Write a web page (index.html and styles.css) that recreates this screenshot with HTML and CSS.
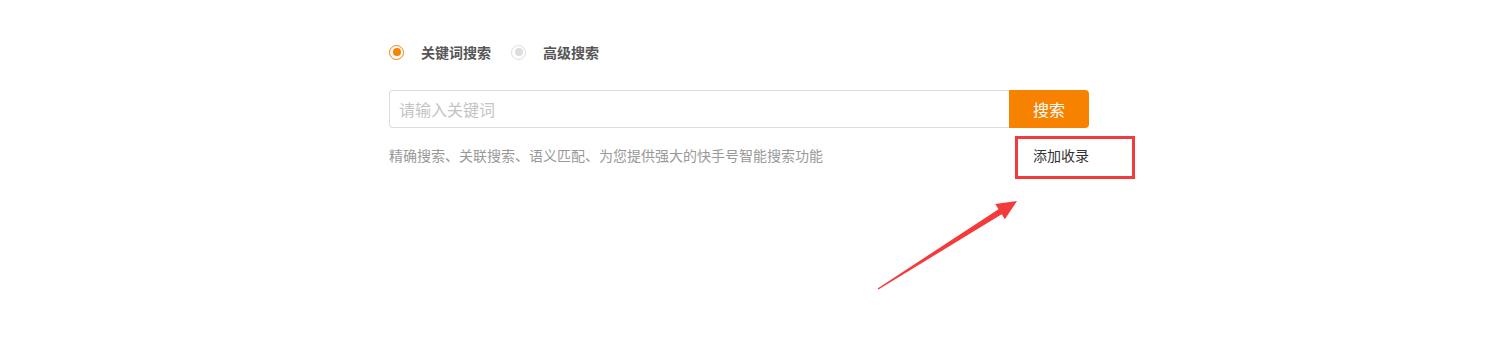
FILE: index.html
```html
<!DOCTYPE html>
<html lang="zh-CN">
<head>
  <meta charset="UTF-8" />
  <title>快手号搜索</title>
  <link rel="stylesheet" href="styles.css">
</head>
<body>
  <div class="search-box">
    <div class="tabs">
      <label class="tab active"><span class="radio"></span>关键词搜索</label>
      <label class="tab"><span class="radio"></span>高级搜索</label>
    </div>

    <div class="search-row">
      <input class="search-input" type="text" placeholder="请输入关键词">
      <button class="search-btn">搜索</button>
    </div>

    <div class="tips">
      <span class="desc">精确搜索、关联搜索、语义匹配、为您提供强大的快手号智能搜索功能</span>
      <a class="add-link" href="#">添加收录<span class="mark"></span></a>
    </div>
  </div>

  <!-- annotation arrow -->
  <svg class="arrow" width="160" height="110" viewBox="0 0 160 110">
    <polygon points="7.6,98.4 128.5,19.2 125.3,14.1 147,11 134.9,29.3 131.7,24.2 8.4,99.6" fill="#f43b3b"/>
  </svg>
</body>
</html>
```

FILE: styles.css
```css
body {
  margin: 0;
  background: #fff;
  font-family: "Noto Sans CJK SC", "Noto Sans", sans-serif;
  color: #333;
}

.search-box {
  width: 700px;
  margin-left: 389px;
  padding-top: 42px;
  padding-bottom: 40px;
}

.tabs {
  display: flex;
  align-items: center;
  height: 20px;
  gap: 20px;
}

.tab {
  display: flex;
  align-items: center;
  gap: 17px;
  font-size: 14px;
  font-weight: bold;
  color: #555;
  line-height: 20px;
  cursor: pointer;
}

.radio {
  width: 13px;
  height: 13px;
  border: 1px solid #ddd;
  border-radius: 50%;
  display: flex;
  align-items: center;
  justify-content: center;
}

.radio::after {
  content: "";
  width: 8px;
  height: 8px;
  border-radius: 50%;
  background: #ddd;
}

.tab.active .radio {
  border-color: #f78200;
}

.tab.active .radio::after {
  background: #f78200;
}

.search-row {
  display: flex;
  margin-top: 28px;
  height: 38px;
}

.search-input {
  box-sizing: border-box;
  width: 620px;
  height: 38px;
  border: 1px solid #ddd;
  border-right: none;
  border-radius: 4px 0 0 4px;
  padding: 0 9px;
  font-family: inherit;
  font-size: 16px;
  outline: none;
}

.search-input::placeholder {
  color: #c4c4c4;
}

.search-btn {
  width: 80px;
  height: 38px;
  border: none;
  border-radius: 0 4px 4px 0;
  background: #f78200;
  color: #fff;
  font-family: inherit;
  font-size: 16px;
  cursor: pointer;
}

.tips {
  display: flex;
  justify-content: space-between;
  align-items: center;
  margin-top: 17px;
  font-size: 14px;
  line-height: 20px;
}

.desc {
  color: #999;
}

.add-link {
  position: relative;
  display: inline-block;
  color: #333;
  text-decoration: none;
}

.mark {
  position: absolute;
  left: -18px;
  right: -46px;
  top: -9px;
  bottom: -14px;
  border: 3px solid #f43b3b;
}

.arrow {
  position: absolute;
  left: 870px;
  top: 190px;
}
```
